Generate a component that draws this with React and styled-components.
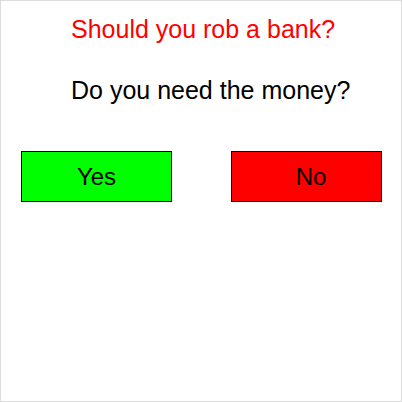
import React from 'react'
import styled, { createGlobalStyle } from 'styled-components'

const GlobalStyle = createGlobalStyle`
    body {
        margin: 0;
        font-family: "Liberation Sans", Arial, sans-serif;
    }
`

const Frame = styled.div`
    width: 402px;
    height: 402px;
    box-sizing: border-box;
    border: 1px solid #dcdcdc;
    background-color: white;
    display: flex;
    flex-direction: column;
`

const Title = styled.h1`
    margin: 14px 0 0 0;
    padding-left: 70px;
    font-size: 25px;
    font-weight: normal;
    line-height: 29px;
    color: ${props => props.color || 'black'};
`

const Question = styled.p`
    margin: 32px 0 0 0;
    padding-left: 70px;
    font-size: 25px;
    line-height: 29px;
    color: black;
`

const Answers = styled.div`
    display: flex;
    justify-content: space-between;
    padding: 0 19px 0 20px;
    margin-top: 46px;
`

const Answer = styled.button`
    width: 151px;
    height: 51px;
    box-sizing: border-box;
    border: 1px solid black;
    border-radius: 0;
    background-color: ${props => props.bg};
    font-family: "Liberation Sans", Arial, sans-serif;
    font-size: 24px;
    color: black;
    padding: 0 0 0 ${props => props.indent || 0}px;
    cursor: pointer;
`

export default function App() {
    return (
        <>
            <GlobalStyle />
            <Frame>
                <Title color="#ff0000">Should you rob a bank?</Title>
                <Question>Do you need the money?</Question>
                <Answers>
                    <Answer bg="#00ff00">Yes</Answer>
                    <Answer bg="#ff0000" indent={9}>No</Answer>
                </Answers>
            </Frame>
        </>
    )
}
